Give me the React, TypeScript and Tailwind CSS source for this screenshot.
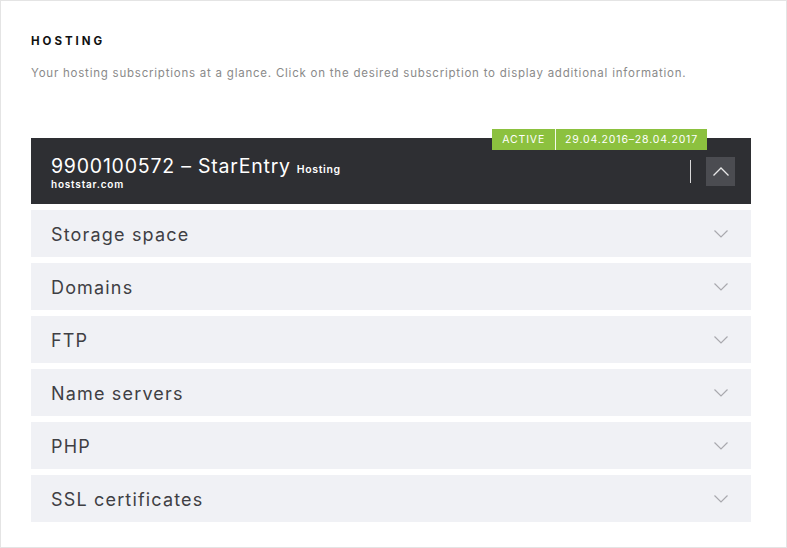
import React from "react";

const rows = ["Storage space", "Domains", "FTP", "Name servers", "PHP", "SSL certificates"];

function ChevronDown() {
  return (
    <svg width="14" height="8" viewBox="0 0 14 8" fill="none">
      <path d="M0.5 0.5 L7 7 L13.5 0.5" stroke="#a9a9ae" strokeWidth="1.2" />
    </svg>
  );
}

export default function App() {
  return (
    <div className="w-[787px] h-[548px] bg-white border border-[#e4e4e4] box-border" style={{ fontFamily: "Inter, 'Open Sans', sans-serif" }}>
      <div className="pl-[30px] pr-[35px] pt-[33px]">
        <h1 className="text-[11.5px] font-bold tracking-[0.26em] text-[#111] leading-[14px]">HOSTING</h1>
        <p className="mt-[18px] text-[11.5px] text-[#8a8a8a] leading-[14px] tracking-[0.067em]">
          Your hosting subscriptions at a glance. Click on the desired subscription to display additional information.
        </p>
        <div className="mt-[58px] relative">
          <div className="absolute right-[44px] top-[-9px] flex h-[21px] bg-[#8cc13f] text-white text-[10.5px] tracking-[0.08em] items-center">
            <span className="px-[10px] border-r border-white/90 h-full flex items-center">ACTIVE</span>
            <span className="px-[9px]">29.04.2016–28.04.2017</span>
          </div>
          <div className="h-[66px] bg-[#2e2f33] flex items-center pl-[20px] pr-[16px]">
            <div className="flex-1 pt-[3px]">
              <div className="flex items-baseline text-white">
                <span className="text-[19.5px] leading-[22px] tracking-[0.04em]">9900100572 – StarEntry</span>
                <span className="ml-[6px] text-[10.5px] font-semibold tracking-[0.06em]">Hosting</span>
              </div>
              <div className="text-white text-[10px] font-semibold leading-[12px] tracking-[0.08em]">hoststar.com</div>
            </div>
            <div className="w-px h-[23px] bg-[#d8d8d8] mr-[15px]" />
            <div className="w-[29px] h-[29px] bg-[#4b4c51] flex items-center justify-center">
              <svg width="16" height="9" viewBox="0 0 16 9" fill="none">
                <path d="M0.5 8.5 L8 1 L15.5 8.5" stroke="#e8e8e8" strokeWidth="1.3" />
              </svg>
            </div>
          </div>
          <div className="mt-[6px] flex flex-col gap-[6px]">
            {rows.map((r) => (
              <div key={r} className="h-[47px] bg-[#f0f1f5] flex items-center justify-between pl-[20px] pr-[23px]">
                <span className="text-[18px] text-[#3f3f44] tracking-[0.065em] translate-y-[1px]">{r}</span>
                <ChevronDown />
              </div>
            ))}
          </div>
        </div>
      </div>
    </div>
  );
}
